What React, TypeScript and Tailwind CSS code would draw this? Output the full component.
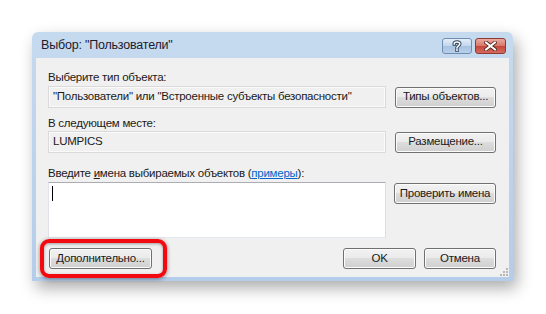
import React from 'react';

const font = { fontFamily: '"Liberation Sans", "Noto Sans", Arial, sans-serif' };

function WinButton({ children, className = '' }: { children: React.ReactNode; className?: string }) {
  return (
    <div
      className={`flex h-[21px] items-center justify-center rounded-[3px] border border-[#707070] bg-[linear-gradient(#f2f2f2_0%,#ebebeb_45%,#dddddd_50%,#cfcfcf_100%)] text-[11.5px] tracking-[-0.25px] text-[#1a1a1a] shadow-[inset_0_0_0_1px_#fcfcfc] ${className}`}
    >
      {children}
    </div>
  );
}

function ReadonlyBox({ text }: { text: string }) {
  return (
    <div className="flex h-[22px] w-[338px] items-center border border-[#dadada] bg-[#f0f0f0] pl-[4px] shadow-[inset_0_0_0_1px_#fafafa]">
      {text}
    </div>
  );
}

export default function App() {
  return (
    <div className="h-[314px] w-[546px] overflow-hidden bg-white pl-[32px] pt-[32px]" style={font}>
      {/* window */}
      <div className="flex h-[249px] w-[481px] flex-col rounded-t-[6px] bg-[linear-gradient(#c6daef,#b4cdea)] px-[4px] pb-[4px] shadow-[4px_7px_16px_rgba(0,0,0,0.33)]">
        {/* title bar */}
        <div className="flex h-[26px] items-center justify-between">
          <span className="pl-[5px] text-[12.5px] tracking-[-0.2px] text-[#1e1a2e]">Выбор: "Пользователи"</span>
          <div className="flex gap-[3px] pr-[3px] pt-[1px]">
            <div className="flex h-[16px] w-[30px] items-center justify-center rounded-[3px] border border-[#6e8db2] bg-[linear-gradient(#e3edf8_0%,#c4d7ee_48%,#a8c2e2_52%,#b9d0ea_100%)]">
              <svg width="10" height="12" viewBox="0 0 10 12">
                <path d="M2.2 4 C2.2 1.4 7.8 1.4 7.8 4 C7.8 5.8 5 5.8 5 7.6 M5 9.3 L5 10.6" fill="none" stroke="#33455e" strokeWidth="3.4" strokeLinecap="square" />
                <path d="M2.2 4 C2.2 1.4 7.8 1.4 7.8 4 C7.8 5.8 5 5.8 5 7.6 M5 9.3 L5 10.6" fill="none" stroke="#ffffff" strokeWidth="1.5" strokeLinecap="square" />
              </svg>
            </div>
            <div className="flex h-[16px] w-[31px] items-center justify-center rounded-[3px] border border-[#8a3b33] bg-[linear-gradient(#ecaaa0_0%,#d9776a_48%,#c4473b_52%,#d66a5c_100%)]">
              <svg width="13" height="10" viewBox="0 0 13 10">
                <path d="M2 1.5 L11 8.5 M11 1.5 L2 8.5" stroke="#4a1f1a" strokeWidth="3.6" strokeLinecap="square" />
                <path d="M2 1.5 L11 8.5 M11 1.5 L2 8.5" stroke="#ffffff" strokeWidth="2" strokeLinecap="square" />
              </svg>
            </div>
          </div>
        </div>

        {/* client area */}
        <div className="relative flex flex-1 flex-col bg-[#f0f0f0] pl-[12px] pr-[13px] pt-[12px] text-[11.5px] tracking-[-0.25px] text-[#1a1a1a]">
          <div className="flex h-[16px] items-center">Выберите тип объекта:</div>
          <div className="flex h-[22px] items-center gap-[9px]">
            <ReadonlyBox text={'"Пользователи" или "Встроенные субъекты безопасности"'} />
            <WinButton className="w-[101px]">Типы объектов...</WinButton>
          </div>

          <div className="mt-[8px] flex h-[15px] items-center">В следующем месте:</div>
          <div className="flex h-[22px] items-center gap-[9px]">
            <ReadonlyBox text="LUMPICS" />
            <WinButton className="w-[101px]">Размещение...</WinButton>
          </div>

          <div className="mt-[12px] flex h-[17px] items-center">
            Введите&nbsp;<span className="underline">и</span>мена выбираемых объектов (
            <span className="text-[#0066cc] underline">примеры</span>):
          </div>
          <div className="flex items-start gap-[8px]">
            <div className="h-[56px] w-[338px] border border-[#abadb3] border-b-[#e3e9ef] border-l-[#e2e3ea] border-r-[#dbdfe6] bg-white pl-[3px] pt-[3px]">
              <div className="h-[15px] w-px bg-black" />
            </div>
            <WinButton className="mt-[1px] w-[102px]">Проверить имена</WinButton>
          </div>

          <div className="mt-[10px] flex items-center">
            <div className="relative ml-[1px]">
              <WinButton className="w-[103px]">Дополнительно...</WinButton>
              <div className="pointer-events-none absolute -bottom-[9px] -left-[9px] -right-[15px] -top-[9px] rounded-[9px] border-[4px] border-[#f20a10] shadow-[0_1px_4px_rgba(0,0,0,0.45),inset_0_1px_3px_rgba(0,0,0,0.35)]" />
            </div>
            <div className="flex-1" />
            <WinButton className="w-[73px]">OK</WinButton>
            <WinButton className="ml-[8px] w-[72px]">Отмена</WinButton>
          </div>

          {/* size grip */}
          <svg className="absolute bottom-[1px] right-[1px]" width="8" height="8" viewBox="0 0 8 8">
            {[
              [6, 0],
              [3, 3],
              [6, 3],
              [0, 6],
              [3, 6],
              [6, 6],
            ].map(([x, y], i) => (
              <rect key={i} x={x} y={y} width="2" height="2" fill="#b8b8b8" />
            ))}
          </svg>
        </div>
      </div>
    </div>
  );
}
